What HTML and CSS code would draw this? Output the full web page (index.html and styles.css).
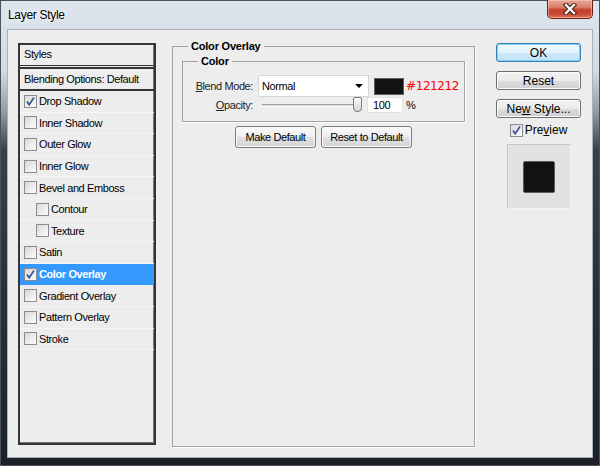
FILE: index.html
```html
<!DOCTYPE html>
<html lang="en">
<head>
    <meta charset="UTF-8">
    <title>Layer Style</title>
    <link rel="stylesheet" href="styles.css">
</head>
<body>
    <div class="window">
        <div class="titlebar">
            <div class="title">Layer Style</div>
            <div class="close-btn">
                <svg width="18" height="12" viewBox="0 0 18 12">
                    <path d="M5 2 L13 10 M13 2 L5 10" stroke="#3b1812" stroke-width="4.4" stroke-linecap="square"/>
                    <path d="M5 2 L13 10 M13 2 L5 10" stroke="#ffffff" stroke-width="2.4" stroke-linecap="square"/>
                </svg>
            </div>
        </div>

        <div class="client">
            <!-- styles list -->
            <div class="styles-list">
                <div class="list-head">Styles</div>
                <div class="list-blend">Blending Options: Default</div>
                <div class="list-row"><span class="check"><svg width="11" height="11" viewBox="0 0 11 11"><path d="M2 5.5 L4.2 8.8 L9 1.5" fill="none" stroke="#3a5497" stroke-width="1.7"/></svg></span>Drop Shadow</div>
                <div class="list-row"><span class="check"></span>Inner Shadow</div>
                <div class="list-row"><span class="check"></span>Outer Glow</div>
                <div class="list-row"><span class="check"></span>Inner Glow</div>
                <div class="list-row"><span class="check"></span>Bevel and Emboss</div>
                <div class="list-row sub"><span class="check"></span>Contour</div>
                <div class="list-row sub"><span class="check"></span>Texture</div>
                <div class="list-row"><span class="check"></span>Satin</div>
                <div class="list-row selected"><span class="check"><svg width="11" height="11" viewBox="0 0 11 11"><path d="M2 5.5 L4.2 8.8 L9 1.5" fill="none" stroke="#3a5497" stroke-width="1.7"/></svg></span>Color Overlay</div>
                <div class="list-row"><span class="check"></span>Gradient Overlay</div>
                <div class="list-row"><span class="check"></span>Pattern Overlay</div>
                <div class="list-row"><span class="check"></span>Stroke</div>
            </div>

            <!-- settings -->
            <fieldset class="group outer-group">
                <legend>Color Overlay</legend>
                <fieldset class="group inner-group">
                    <legend>Color</legend>
                    <div class="field-row">
                        <span class="field-label"><u>B</u>lend Mode:</span>
                        <div class="select">Normal<span class="arrow"></span></div>
                        <div class="swatch"></div>
                        <span class="hex">#121212</span>
                    </div>
                    <div class="field-row opacity-row">
                        <span class="field-label"><u>O</u>pacity:</span>
                        <div class="slider">
                            <div class="track"></div>
                            <div class="thumb"></div>
                        </div>
                        <div class="num-input">100</div>
                        <span class="unit">%</span>
                    </div>
                </fieldset>
                <div class="default-buttons">
                    <button class="btn make-default">Make Default</button>
                    <button class="btn reset-default">Reset to Default</button>
                </div>
            </fieldset>

            <!-- buttons and preview -->
            <div class="side">
                <button class="win-btn default">OK</button>
                <button class="win-btn">Reset</button>
                <button class="win-btn last">Ne<u>w</u> Style...</button>
                <div class="preview-check"><span class="check"><svg width="11" height="11" viewBox="0 0 11 11"><path d="M2 5.5 L4.2 8.8 L9 1.5" fill="none" stroke="#3a5497" stroke-width="1.7"/></svg></span>Pre<u>v</u>iew</div>
                <div class="preview-box"><div class="preview-swatch"></div></div>
            </div>
        </div>
    </div>
</body>
</html>
```

FILE: styles.css
```css
body {
    margin: 0;
    padding: 0;
    width: 600px;
    height: 466px;
    overflow: hidden;
    font-family: "Liberation Sans", Arial, sans-serif;
    font-size: 11px;
    background: linear-gradient(to bottom, #dde5ee 0, #d3dbe4 70px, #8d959e 115px, #3a4048 150px, #2a2f36 300px, #1d2127 466px);
}

.window {
    display: flex;
    flex-direction: column;
    height: 466px;
    box-sizing: border-box;
    box-shadow: inset 0 0 0 1px #4b525b;
}

.titlebar {
    height: 29px;
    display: flex;
    justify-content: space-between;
    align-items: flex-start;
    padding: 0 7px 0 8px;
}

.title {
    margin-top: 8px;
    font-size: 12px;
    line-height: 14px;
    letter-spacing: -0.3px;
    color: #000;
    text-shadow: 0 0 6px #fff, 0 0 3px #fff;
}

.close-btn {
    width: 46px;
    height: 19px;
    box-sizing: border-box;
    border: 1px solid #6a2418;
    border-top: none;
    border-radius: 0 0 5px 5px;
    background: linear-gradient(to bottom, #e9a796 0, #d9806b 40%, #c4402c 55%, #c94a34 80%, #df7a5c 100%);
    box-shadow: inset 0 0 0 1px rgba(255, 210, 200, 0.5);
    display: flex;
    justify-content: center;
    align-items: center;
}

.client {
    flex: 1;
    margin: 0 7px 8px 7px;
    border: 1px solid #a9b1bb;
    background-color: #ededed;
    display: flex;
    align-items: flex-start;
    padding: 10px 11px 0 10px;
    color: #000;
}

/* left list */
.styles-list {
    flex-shrink: 0;
    margin-top: 3px;
    width: 138px;
    height: 402px;
    box-sizing: border-box;
    border: 2px solid #353535;
    box-shadow: inset -1px -1px 0 #777;
    letter-spacing: -0.4px;
}

.list-head {
    height: 20px;
    line-height: 19px;
    padding-left: 4px;
    border-bottom: 1px solid #333;
}

.list-blend {
    height: 24px;
    box-sizing: border-box;
    line-height: 20px;
    padding-left: 4px;
    margin-top: 1px;
    border-top: 2px solid #333;
    border-bottom: 2px solid #333;
}

.list-row {
    height: 21.6px;
    box-sizing: border-box;
    border-bottom: 1px dotted #fff;
    display: flex;
    align-items: center;
    padding-left: 4px;
}

.list-row.sub {
    padding-left: 16px;
}

.list-row.selected {
    background-color: #3399ff;
    color: #fff;
    font-weight: bold;
    border-bottom-color: #3399ff;
}

.check {
    width: 13px;
    height: 13px;
    box-sizing: border-box;
    border: 1px solid #8c8c8c;
    background: linear-gradient(135deg, #d6d6d6 0, #efefef 60%, #fbfbfb 100%);
    margin-right: 2px;
    display: flex;
    justify-content: center;
    align-items: center;
    flex-shrink: 0;
}

/* group boxes */
.group {
    margin: 0;
    min-width: 0;
    box-sizing: border-box;
    border: 1px solid #a3a3a3;
    box-shadow: 1px 1px 0 #fff;
}

.group legend {
    font-weight: bold;
    line-height: 13px;
    padding: 0 3px;
    letter-spacing: -0.2px;
}

.outer-group {
    flex-shrink: 0;
    margin-left: 16px;
    width: 303px;
    height: 407px;
    padding: 0 9px;
}

.outer-group > legend {
    margin-left: 6px;
}

.inner-group {
    margin-top: 2px;
    padding: 7px 8px 8px 8px;
}

.inner-group > legend {
    margin-left: 7px;
}

.field-row {
    display: flex;
    align-items: center;
    height: 22px;
    letter-spacing: -0.4px;
}

.field-row.opacity-row {
    height: 16px;
}

.field-label {
    flex-shrink: 0;
    width: 62px;
    text-align: right;
    margin-right: 5px;
    color: #222;
}

.select {
    flex-shrink: 0;
    width: 111px;
    height: 22px;
    box-sizing: border-box;
    border: 1px solid #d6d6d6;
    background-color: #fff;
    padding-left: 3px;
    display: flex;
    align-items: center;
    justify-content: space-between;
}

.arrow {
    width: 0;
    height: 0;
    border-left: 4px solid transparent;
    border-right: 4px solid transparent;
    border-top: 4px solid #000;
    margin-right: 5px;
}

.swatch {
    flex-shrink: 0;
    margin-left: 5px;
    width: 30px;
    height: 17px;
    box-sizing: border-box;
    border: 1px solid #5f5f5f;
    background-color: #121212;
}

.hex {
    margin-left: 2px;
    font-family: "DejaVu Sans", Verdana, sans-serif;
    font-size: 12px;
    letter-spacing: -0.4px;
    color: #f00;
    white-space: nowrap;
}

.slider {
    flex-shrink: 0;
    position: relative;
    width: 105px;
    height: 16px;
}

.track {
    position: absolute;
    left: 4px;
    right: 5px;
    top: 7px;
    height: 1px;
    border-top: 1px solid #a0a0a0;
    border-bottom: 1px solid #fff;
    background-color: #d8d8d8;
}

.thumb {
    position: absolute;
    left: 95px;
    top: 0;
    width: 9px;
    height: 15px;
    box-sizing: border-box;
    border: 1px solid #7d7d7d;
    border-radius: 2px 2px 4px 4px;
    background: linear-gradient(to bottom, #fdfdfd 0, #e8e8e8 50%, #d6d6d6 100%);
}

.num-input {
    flex-shrink: 0;
    margin-left: 4px;
    width: 36px;
    height: 16px;
    box-sizing: border-box;
    border: 1px solid #e2e2e2;
    background-color: #fff;
    padding-left: 5px;
    line-height: 14px;
}

.unit {
    margin-left: 3px;
}

.default-buttons {
    margin-top: 4px;
    display: flex;
    justify-content: center;
    gap: 5px;
}

.btn {
    height: 22px;
    padding: 0;
    font-family: "Liberation Sans", Arial, sans-serif;
    font-size: 11px;
    letter-spacing: -0.4px;
    color: #000;
    border: 1px solid #7a7a7a;
    border-radius: 3px;
    background: linear-gradient(to bottom, #fafafa 0, #eeeeee 50%, #e0e0e0 51%, #d5d5d5 100%);
    box-shadow: inset 0 0 0 1px #fbfbfb;
}

.make-default {
    width: 81px;
}

.reset-default {
    width: 91px;
}

/* right side */
.side {
    flex-shrink: 0;
    margin-left: 21px;
    margin-top: 3px;
    width: 85px;
    display: flex;
    flex-direction: column;
    align-items: center;
}

.win-btn {
    width: 85px;
    height: 19px;
    margin-bottom: 9px;
    padding: 0;
    font-family: "Liberation Sans", Arial, sans-serif;
    font-size: 12px;
    color: #000;
    border: 1px solid #707070;
    border-radius: 3px;
    background: linear-gradient(to bottom, #f2f2f2 0, #ebebeb 50%, #dddddd 51%, #cfcfcf 100%);
    box-shadow: inset 0 0 0 1px #fcfcfc;
}

.win-btn.default {
    border-color: #3c7fb1;
    background: linear-gradient(to bottom, #f1f9fd 0, #e2f3fc 50%, #cdeafa 51%, #bde2f6 100%);
    box-shadow: inset 0 0 0 1px #7fd1f5;
}

.win-btn.last {
    margin-bottom: 5px;
}

.preview-check {
    height: 14px;
    display: flex;
    align-items: center;
    font-size: 12px;
}

.preview-box {
    margin-top: 7px;
    width: 64px;
    height: 65px;
    box-sizing: border-box;
    border: 1px solid #c4c4c4;
    border-right-color: #f4f4f4;
    border-bottom-color: #f4f4f4;
    background-color: #e2e2e2;
    display: flex;
    justify-content: center;
    align-items: center;
}

.preview-swatch {
    width: 32px;
    height: 32px;
    box-sizing: border-box;
    border: 1px solid #5c5c5c;
    border-radius: 2px;
    background-color: #121212;
}
```
